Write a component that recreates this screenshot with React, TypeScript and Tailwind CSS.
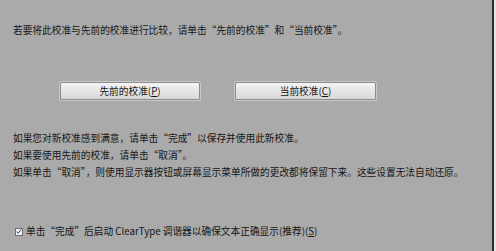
export default function App() {
  return (
    <div
      className="flex h-[251px] w-[496px] overflow-hidden bg-[#aaaaaa] text-[9.7px] leading-[17px] text-[#161616]"
      style={{ fontFamily: '"Noto Sans CJK SC", "Noto Sans", sans-serif' }}
    >
      <div className="flex w-[492px] flex-col pl-[13px]">
        <p className="mt-[22px]">若要将此校准与先前的校准进行比较，请单击“先前的校准”和“当前校准”。</p>

        <div className="mt-[43px] flex">
          <button className="ml-[47px] flex h-[18px] w-[140px] items-center justify-center rounded-[2px] border border-[#8c8c8c] bg-gradient-to-b from-[#f4f4f4] to-[#d8d8d8] shadow-[0_0_0_1px_#c8c8c8]">
            先前的校准(<span className="underline">P</span>)
          </button>
          <button className="ml-[35px] flex h-[18px] w-[141px] items-center justify-center rounded-[2px] border border-[#8c8c8c] bg-gradient-to-b from-[#f4f4f4] to-[#d8d8d8] shadow-[0_0_0_1px_#c8c8c8]">
            当前校准(<span className="underline">C</span>)
          </button>
        </div>

        <div className="mt-[30px]">
          <p>如果您对新校准感到满意，请单击“完成”以保存并使用此新校准。</p>
          <p>如果要使用先前的校准，请单击“取消”。</p>
          <p>如果单击“取消”，则使用显示器按钮或屏幕显示菜单所做的更改都将保留下来。这些设置无法自动还原。</p>
        </div>

        <label className="mt-[42px] flex items-center gap-[3px] pl-[2px]">
          <span className="flex h-[8px] w-[8px] items-center justify-center border border-[#6f6f6f] bg-[#f4f4f4]">
            <svg viewBox="0 0 8 8" className="h-[7px] w-[7px]">
              <path d="M1 4.2 L3 6.2 L7 1.2" fill="none" stroke="#2a3a6a" strokeWidth="1.3" />
            </svg>
          </span>
          <span>
            单击“完成”后启动 ClearType 调谐器以确保文本正确显示(推荐)(<span className="underline">S</span>)
          </span>
        </label>
      </div>
      <div className="w-[2px] bg-[#2e2e2e]" />
      <div className="flex-1 bg-[#e6e6e6]" />
    </div>
  )
}
